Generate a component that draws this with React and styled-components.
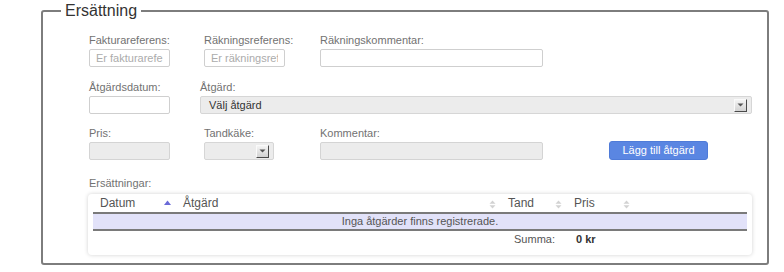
import React from "react";
import styled, { createGlobalStyle } from "styled-components";

const Global = createGlobalStyle`
  html, body { margin: 0; padding: 0; background: #fff; }
  body { font-family: "Liberation Sans", Arial, sans-serif; }
`;

const Page = styled.div`
  width: 784px;
  height: 272px;
  box-sizing: border-box;
  padding: 1px 0 0 41px;
  overflow: hidden;
`;

const Fieldset = styled.fieldset`
  width: 728px;
  height: 264px;
  box-sizing: border-box;
  margin: 0;
  padding: 0;
  border: 2px solid #7d7d7d;
  border-radius: 3px;
  min-width: 0;
`;

const Legend = styled.legend`
  margin-left: 18px;
  padding: 0 4px;
  font-size: 16px;
  line-height: 20px;
  color: #333;
`;

const Content = styled.div`
  padding: 12px 15px 0 46px;
`;

const Row = styled.div`
  display: flex;
  align-items: flex-end;
  margin-bottom: ${(p) => p.$mb || 0}px;
`;

const Field = styled.div`
  display: flex;
  flex-direction: column;
  width: ${(p) => (p.$w ? `${p.$w}px` : "auto")};
  flex: ${(p) => (p.$grow ? 1 : "none")};
`;

const Label = styled.label`
  font-size: 11px;
  line-height: 14px;
  color: #727272;
  margin-bottom: 2px;
  white-space: nowrap;
`;

const Input = styled.input`
  box-sizing: border-box;
  width: ${(p) => p.$w}px;
  height: 18px;
  margin: 0;
  padding: 0 6px;
  border: 1px solid ${(p) => (p.disabled ? "#d4d4d4" : "#cfcfcf")};
  border-radius: 2px;
  background: ${(p) => (p.disabled ? "#ececec" : "#fff")};
  font-family: "Liberation Sans", Arial, sans-serif;
  font-size: 11px;
  color: #333;
  outline: none;
  &::placeholder { color: #ababab; }
`;

const Select = styled.div`
  box-sizing: border-box;
  width: ${(p) => (p.$w ? `${p.$w}px` : "auto")};
  height: 18px;
  display: flex;
  align-items: center;
  justify-content: space-between;
  padding: 0 4px 0 8px;
  border: 1px solid #d6d6d6;
  border-radius: 2px;
  background: #ececec;
  font-size: 11px;
  color: #333;
`;

const DropBtn = styled.span`
  box-sizing: border-box;
  width: 13px;
  height: 13px;
  display: flex;
  align-items: center;
  justify-content: center;
  background: linear-gradient(#f4f4f4, #d2d2d2);
  border-top: 1px solid #fafafa;
  border-left: 1px solid #fafafa;
  border-right: 1px solid #4a4a4a;
  border-bottom: 1px solid #4a4a4a;
`;

const Button = styled.button`
  box-sizing: border-box;
  width: 99px;
  height: 19px;
  margin-left: 66px;
  padding: 0;
  border: 1px solid #4f7bd8;
  border-radius: 3px;
  background: #5a86e2;
  color: #fff;
  font-family: "Liberation Sans", Arial, sans-serif;
  font-size: 11px;
  line-height: 17px;
`;

const SectionLabel = styled(Label)`
  display: block;
  margin: 16px 0 4px;
`;

const TableBox = styled.div`
  box-sizing: border-box;
  width: 664px;
  margin-left: -1px;
  height: 61px;
  padding: 0 5px;
  border-radius: 4px;
  background: #fff;
  box-shadow: 0 0 4px rgba(0, 0, 0, 0.18);
`;

const Grid = styled.div`
  display: grid;
  grid-template-columns: 83px 325px 66px 68px 1fr;
`;

const HeadCell = styled.div`
  position: relative;
  height: 18px;
  padding-left: 7px;
  font-size: 12px;
  line-height: 19px;
  color: #555;
  border-bottom: 2px solid #7a7a7a;
`;

const SortIcon = styled.svg`
  position: absolute;
  right: 5px;
  top: 6px;
`;

const EmptyRow = styled.div`
  grid-column: 1 / -1;
  height: 15px;
  background: #e2e2f9;
  border-bottom: 2px solid #7a7a7a;
  text-align: center;
  font-size: 11px;
  line-height: 15px;
  color: #555;
`;

const FootCell = styled.div`
  height: 17px;
  font-size: 11px;
  line-height: 17px;
  color: ${(p) => (p.$bold ? "#333" : "#555")};
  font-weight: ${(p) => (p.$bold ? "bold" : "normal")};
  text-align: ${(p) => p.$align || "left"};
  padding: ${(p) => p.$pad || "0"};
`;

const Down = () => (
  <svg width="7" height="4" viewBox="0 0 7 4">
    <path d="M0.5 0.5 L6.5 0.5 L3.5 3.5 Z" fill="#555" />
  </svg>
);

const Sort = ({ active }) =>
  active ? (
    <SortIcon width="7" height="6" viewBox="0 0 7 6">
      <path d="M0 5 L3.5 0.5 L7 5 Z" fill="#6a6ad8" />
    </SortIcon>
  ) : (
    <SortIcon width="7" height="9" viewBox="0 0 7 9">
      <path d="M0.5 3.8 L3.5 0.5 L6.5 3.8 Z M0.5 5.2 L3.5 8.5 L6.5 5.2 Z" fill="#d2d2d2" />
    </SortIcon>
  );

export default function App() {
  return (
    <Page>
      <Global />
      <Fieldset>
        <Legend>Ersättning</Legend>
        <Content>
          <Row $mb={13}>
            <Field $w={115}>
              <Label>Fakturareferens:</Label>
              <Input $w={81} placeholder="Er fakturareferens" />
            </Field>
            <Field $w={116}>
              <Label>Räkningsreferens:</Label>
              <Input $w={81} placeholder="Er räkningsreferens" />
            </Field>
            <Field>
              <Label>Räkningskommentar:</Label>
              <Input $w={223} />
            </Field>
          </Row>
          <Row $mb={12}>
            <Field $w={111}>
              <Label>Åtgärdsdatum:</Label>
              <Input $w={81} />
            </Field>
            <Field $grow>
              <Label>Åtgärd:</Label>
              <Select>
                <span>Välj åtgärd</span>
                <DropBtn><Down /></DropBtn>
              </Select>
            </Field>
          </Row>
          <Row>
            <Field $w={115}>
              <Label>Pris:</Label>
              <Input $w={81} disabled />
            </Field>
            <Field $w={116}>
              <Label>Tandkäke:</Label>
              <Select $w={70}>
                <span />
                <DropBtn><Down /></DropBtn>
              </Select>
            </Field>
            <Field>
              <Label>Kommentar:</Label>
              <Input $w={223} disabled />
            </Field>
            <Button>Lägg till åtgärd</Button>
          </Row>
          <SectionLabel>Ersättningar:</SectionLabel>
          <TableBox>
            <Grid>
              <HeadCell>Datum<Sort active /></HeadCell>
              <HeadCell>Åtgärd<Sort /></HeadCell>
              <HeadCell>Tand<Sort /></HeadCell>
              <HeadCell>Pris<Sort /></HeadCell>
              <HeadCell />
              <EmptyRow>Inga åtgärder finns registrerade.</EmptyRow>
              <FootCell />
              <FootCell />
              <FootCell $align="right" $pad="0 12px 0 0">Summa:</FootCell>
              <FootCell $bold $pad="0 0 0 9px">0 kr</FootCell>
              <FootCell />
            </Grid>
          </TableBox>
        </Content>
      </Fieldset>
    </Page>
  );
}
